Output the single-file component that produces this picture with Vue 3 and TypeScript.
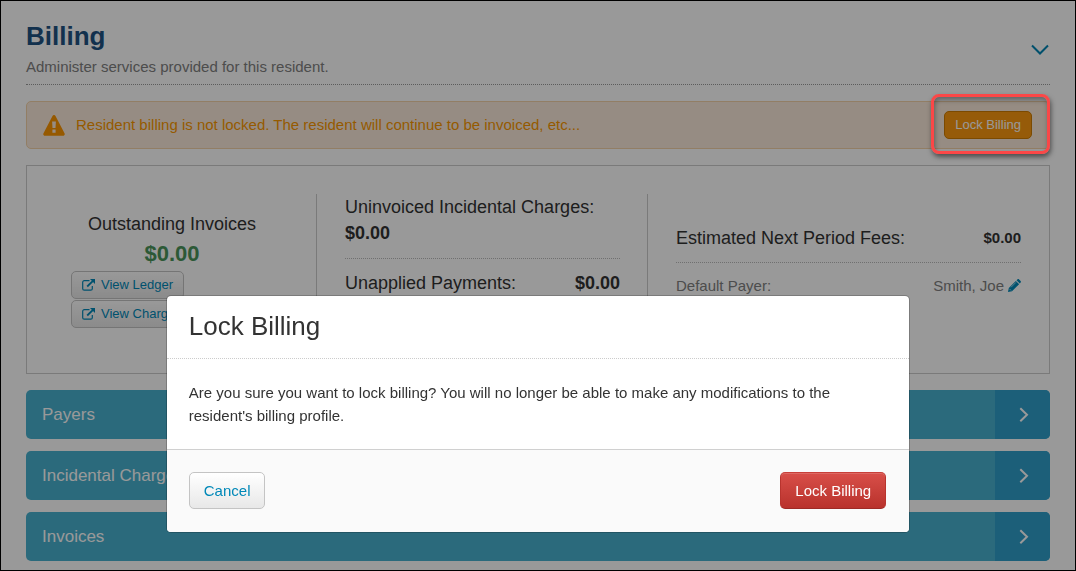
<script setup lang="ts">
import { ref } from 'vue'

const dialogOpen = ref<boolean>(true)
const sections: string[] = ['Payers', 'Incidental Charges', 'Invoices']
const links: string[] = ['View Ledger', 'View Charges']
</script>

<template>
  <div class="page">
    <main class="content">
      <header class="heading">
        <div>
          <h1>Billing</h1>
          <p>Administer services provided for this resident.</p>
        </div>
        <button class="collapse" type="button" aria-label="Collapse billing">
          <svg width="18" height="12" viewBox="0 0 18 12"><path d="M1 1.5 9 9.500l8-8" /></svg>
        </button>
      </header>

      <div class="alert" role="alert">
        <svg class="warn" width="22" height="21" viewBox="0 0 22 21">
          <path fill-rule="evenodd" d="M11 0c.7 0 1.2.3 1.500.9l9 17.300c.7 1.300-.1 2.500-1.500 2.500H2c-1.400 0-2.200-1.200-1.500-2.500L9.500.9C9.800.3 10.300 0 11 0ZM9.100 6.400l.4 6.700h3l.4-6.700ZM9.400 14.500v3.200h3.200v-3.200Z" />
        </svg>
        <span class="message">Resident billing is not locked. The resident will continue to be invoiced, etc...</span>
        <span class="callout">
          <button class="btn small orange" type="button" @click="dialogOpen = true">Lock Billing</button>
        </span>
      </div>

      <section class="summary">
        <div class="col outstanding">
          <div class="label">Outstanding Invoices</div>
          <div class="total">$0.00</div>
          <div class="links">
            <button v-for="link in links" :key="link" class="btn small plain" type="button">
              <svg width="13" height="12" viewBox="0 0 13 12">
                <path class="line" d="M7.500 1.700H2.300C1.300 1.700.7 2.400.7 3.200v6.500c0 .9.6 1.500 1.600 1.500h6.400c1 0 1.600-.6 1.600-1.500V7" />
                <path class="line thick" d="M5.200 7.500 11 1.800" />
                <path d="M8 0h5v5Z" />
              </svg>
              {{ link }}
            </button>
          </div>
        </div>
        <div class="col charges">
          <div class="item wrap"><span>Uninvoiced Incidental Charges:</span> <strong>$0.00</strong></div>
          <div class="item"><span>Unapplied Payments:</span> <strong>$0.00</strong></div>
        </div>
        <div class="col fees">
          <div class="item"><span>Estimated Next Period Fees:</span> <strong>$0.00</strong></div>
          <div class="item payer">
            <span>Default Payer:</span>
            <span class="name">Smith, Joe
              <button class="edit" type="button" aria-label="Edit default payer">
                <svg width="13" height="13" viewBox="0 0 13 13">
                  <path d="M7.800 1.900 11.100 5.200 4 12.200 0 13l.8-4Z" />
                  <path d="m8.500 1.200.9-.8c.5-.5 1.200-.5 1.700 0l1.500 1.500c.5.5.5 1.200 0 1.700l-.8.9Z" />
                  <path class="shine" d="M3 8.300 7.900 3.400M1.500 9.900l1.600 1.600" />
                </svg>
              </button>
            </span>
          </div>
        </div>
      </section>

      <nav class="sections">
        <button v-for="section in sections" :key="section" class="section" type="button">
          <span class="name">{{ section }}</span>
          <span class="arrow">
            <svg width="10" height="16" viewBox="0 0 10 16"><path d="m1.300 1.300 6.700 6.500-6.700 6.500" /></svg>
          </span>
        </button>
      </nav>
    </main>

    <div v-if="dialogOpen" class="backdrop">
      <div class="dialog" role="dialog" aria-modal="true" aria-labelledby="dialog-title">
        <h2 id="dialog-title">Lock Billing</h2>
        <p>Are you sure you want to lock billing? You will no longer be able to make any modifications to the resident's billing profile.</p>
        <footer>
          <button class="btn plain" type="button" @click="dialogOpen = false">Cancel</button>
          <button class="btn red" type="button" @click="dialogOpen = false">Lock Billing</button>
        </footer>
      </div>
    </div>
  </div>
</template>

<style>
body {
  margin: 0;
}
</style>

<style scoped>
.page {
  box-sizing: border-box;
  min-height: 100vh;
  border: 1px solid #000;
  background: #fff;
  color: #333;
  font: 15px/23px "Liberation Sans", Arial, sans-serif;
}
.content {
  padding: 19px 25px 8px;
}
h1,
h2,
p {
  margin: 0;
}
button {
  font-family: inherit;
  cursor: pointer;
}
svg {
  display: block;
  flex: none;
}
.heading {
  display: flex;
  justify-content: space-between;
  align-items: center;
  padding-bottom: 6px;
  border-bottom: 1px dotted #999;
}
h1 {
  color: #1e5282;
  font-size: 26px;
  line-height: 32px;
}
.heading p {
  padding-top: 3px;
  color: #808080;
}
.collapse {
  padding: 2px 1px 0 0;
  border: 0;
  background: none;
}
.collapse path {
  fill: none;
  stroke: #0085b5;
  stroke-width: 2;
}
.alert {
  display: flex;
  align-items: center;
  box-sizing: border-box;
  min-height: 48px;
  margin: 16px 0;
  padding: 9px 17px 9px 16px;
  border: 1px solid #f4d3a8;
  border-radius: 5px;
  background: #fbeadb;
  color: #f99700;
}
.warn {
  fill: #fb9500;
}
.message {
  flex: 1;
  padding: 0 0 2px 11px;
}
.callout {
  position: relative;
}
.callout::after {
  content: "";
  position: absolute;
  z-index: 20;
  inset: -17px -18px -15px -13px;
  border: 3px solid #fb4747;
  border-radius: 8px;
  box-shadow: 1px 3px 5px rgba(0, 0, 0, 0.5), inset 1px 3px 5px rgba(0, 0, 0, 0.35);
  pointer-events: none;
}
.btn {
  display: flex;
  align-items: center;
  padding: 6px 14px;
  border: 1px solid #c4c4c4;
  border-radius: 5px;
  font-size: 15px;
  line-height: 23px;
}
.small {
  padding: 3px 10px;
  font-size: 13px;
  line-height: 20px;
}
.plain {
  background: linear-gradient(#fff, #e8e8e8);
  color: #0088b8;
}
.orange {
  border-color: #cf7c00;
  background: #fa9810;
  color: #fff;
}
.red {
  border-color: #c83f39 #b8342e #9e2a25;
  background: linear-gradient(#d84f49, #b9322c);
  box-shadow: inset 0 1px 0 rgba(255, 255, 255, 0.15);
  color: #fff;
}
.summary {
  display: grid;
  grid-template-columns: 262fr 331fr 373fr;
  padding: 28px;
  border: 1px solid #ccc;
}
.col {
  box-sizing: border-box;
  min-height: 151px;
  padding: 0 27px 0 28px;
  border-right: 1px solid #ccc;
  font-size: 18px;
  line-height: 26px;
}
.outstanding {
  padding-left: 0;
  text-align: center;
}
.label {
  padding-top: 17px;
}
.total {
  color: #4a945a;
  font-size: 22px;
  font-weight: bold;
  line-height: 34px;
}
.links {
  display: flex;
  flex-direction: column;
  align-items: flex-start;
  gap: 1px;
  padding-left: 16px;
}
.links svg {
  margin-right: 6px;
  fill: #0088b8;
}
.links .line {
  fill: none;
  stroke: #0088b8;
  stroke-width: 1.2;
}
.links .thick {
  stroke-width: 1.8;
}
.item {
  display: flex;
  justify-content: space-between;
}
.wrap {
  display: block;
}
.wrap strong {
  display: block;
}
.item + .item {
  margin-top: 12px;
  padding-top: 11px;
  border-top: 1px dotted #bbb;
}
.fees {
  padding-top: 31px;
  padding-right: 0;
  border-right: 0;
}
.fees strong {
  font-size: 15px;
}
.fees .item + .item {
  margin-top: 11px;
}
.payer {
  color: #808080;
  font-size: 15px;
  line-height: 24px;
}
.payer .name {
  display: flex;
  align-items: center;
  gap: 4px;
}
.edit {
  padding: 0 0 2px;
  border: 0;
  background: none;
}
.edit svg {
  fill: #0088b8;
}
.edit .shine {
  fill: none;
  stroke: #fff;
  stroke-width: 0.6;
}
.sections {
  display: grid;
  gap: 12px;
  margin-top: 16px;
}
.section {
  display: flex;
  padding: 0;
  overflow: hidden;
  border: 0;
  border-radius: 5px;
  background: #48b1cf;
  color: #fff;
  font-size: 17px;
  line-height: 49px;
  text-align: left;
}
.section .name {
  flex: 1;
  padding-left: 16px;
}
.arrow {
  display: flex;
  align-items: center;
  justify-content: center;
  width: 55px;
  padding-left: 2px;
  box-sizing: border-box;
  background: #309eca;
}
.arrow path {
  fill: none;
  stroke: #fff;
  stroke-width: 2;
}
.backdrop {
  position: fixed;
  inset: 0;
  z-index: 10;
  display: flex;
  align-items: flex-end;
  justify-content: center;
  padding-bottom: 38px;
  background: rgba(0, 0, 0, 0.4);
}
.dialog {
  width: 69%;
  border: 1px solid rgba(0, 0, 0, 0.2);
  border-radius: 5px;
  background: #fff;
  background-clip: padding-box;
  overflow: hidden;
}
.dialog h2 {
  padding: 15px 22px 17px;
  border-bottom: 1px dotted #ccc;
  font-size: 26px;
  font-weight: normal;
  line-height: 30px;
}
.dialog p {
  padding: 22px;
}
.dialog footer {
  display: flex;
  justify-content: space-between;
  padding: 22px 23px 23px 22px;
  border-top: 1px solid #d0d0d0;
  background: #fafafa;
}
</style>
